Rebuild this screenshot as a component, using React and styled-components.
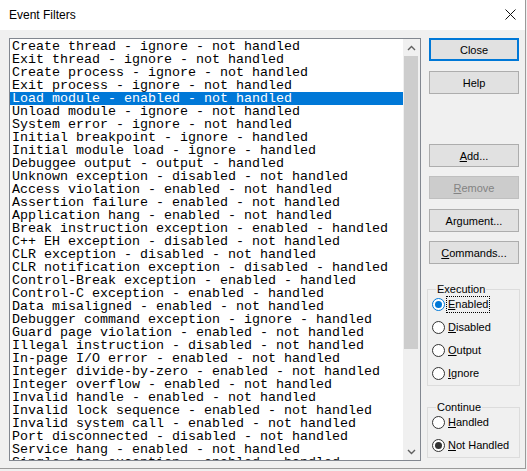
import React from "react";
import styled, { createGlobalStyle } from "styled-components";

const Global = createGlobalStyle`
  html, body { margin: 0; padding: 0; background: #f0f0f0; }
  * { box-sizing: border-box; }
`;

const Screen = styled.div`
  width: 527px;
  height: 471px;
  background: #f0f0f0;
  overflow: hidden;
`;

const Dialog = styled.div`
  width: 526px;
  height: 469px;
  border-right: 1px solid #9a9a9a;
  border-bottom: 1px solid #9a9a9a;
  display: flex;
  flex-direction: column;
  background: #f0f0f0;
`;

const TitleBar = styled.div`
  height: 30px;
  flex: 0 0 30px;
  background: #ffffff;
  display: flex;
  align-items: center;
  justify-content: space-between;
  padding: 0 8px 0 9px;
  font-family: "Liberation Sans", Arial, sans-serif;
  font-size: 12px;
  color: #000;
`;

const CloseGlyph = styled.svg`
  width: 11px;
  height: 11px;
  margin-right: 1px;
  margin-top: -1px;
`;

const Body = styled.div`
  flex: 1;
  display: flex;
  padding: 8px 0 0 9px;
  gap: 6px;
`;

const ListBox = styled.div`
  width: 412px;
  height: 423px;
  border: 1px solid #828790;
  background: #ffffff;
  display: flex;
`;

const Rows = styled.div`
  flex: 1;
  overflow: hidden;
  padding-top: 1px;
`;

const Row = styled.div`
  height: 13px;
  line-height: 13px;
  padding-left: 2px;
  white-space: pre;
  font-family: "Liberation Mono", "Courier New", monospace;
  font-size: 13.33px;
  color: ${(p) => (p.$selected ? "#ffffff" : "#000000")};
  background: ${(p) => (p.$selected ? "#0078d7" : "transparent")};
`;

const ScrollBar = styled.div`
  width: 17px;
  flex: 0 0 17px;
  background: #f0f0f0;
  display: flex;
  flex-direction: column;
`;

const ScrollArrow = styled.div`
  height: 17px;
  flex: 0 0 17px;
  display: flex;
  align-items: center;
  justify-content: center;
`;

const Track = styled.div`
  flex: 1;
  padding: 0 2px 0 1px;
`;

const Thumb = styled.div`
  height: 293px;
  background: #cdcdcd;
`;

const Side = styled.div`
  width: 93px;
  display: flex;
  flex-direction: column;
`;

const Button = styled.div`
  width: 90px;
  height: 23px;
  margin-left: 2px;
  margin-top: ${(p) => p.$mt || 0}px;
  display: flex;
  align-items: center;
  justify-content: center;
  font-family: "Liberation Sans", Arial, sans-serif;
  font-size: 11px;
  background: ${(p) => (p.$disabled ? "#cccccc" : "#e1e1e1")};
  color: ${(p) => (p.$disabled ? "#838383" : "#000000")};
  border: ${(p) =>
    p.$default ? "2px solid #0078d7" : p.$disabled ? "1px solid #bfbfbf" : "1px solid #adadad"};
`;

const Group = styled.div`
  position: relative;
  margin-top: ${(p) => p.$mt}px;
  height: ${(p) => p.$h}px;
  border: 1px solid #dcdcdc;
  padding: 3px 0 0 4px;
  display: flex;
  flex-direction: column;
`;

const GroupLabel = styled.span`
  position: absolute;
  top: -8px;
  left: 8px;
  padding: 0 1px;
  background: #f0f0f0;
  font-family: "Liberation Sans", Arial, sans-serif;
  font-size: 11px;
  line-height: 14px;
  color: #000;
`;

const Radio = styled.div`
  height: 23px;
  display: flex;
  align-items: center;
  gap: 2px;
  font-family: "Liberation Sans", Arial, sans-serif;
  font-size: 11px;
  color: #000;
`;

const Circle = styled.span`
  width: 13px;
  height: 13px;
  flex: 0 0 13px;
  border-radius: 50%;
  border: 1px solid ${(p) => (p.$focus ? "#0078d7" : "#333333")};
  background: #ffffff;
  display: flex;
  align-items: center;
  justify-content: center;
  &::after {
    content: "";
    display: ${(p) => (p.$checked ? "block" : "none")};
    width: 7px;
    height: 7px;
    border-radius: 50%;
    background: ${(p) => (p.$focus ? "#0078d7" : "#333333")};
  }
`;

const RadioText = styled.span`
  padding: 1px 1px;
  line-height: 13px;
  outline: ${(p) => (p.$focus ? "1px dotted #000" : "none")};
`;

const items = [
  "Create thread - ignore - not handled",
  "Exit thread - ignore - not handled",
  "Create process - ignore - not handled",
  "Exit process - ignore - not handled",
  "Load module - enabled - not handled",
  "Unload module - ignore - not handled",
  "System error - ignore - not handled",
  "Initial breakpoint - ignore - handled",
  "Initial module load - ignore - handled",
  "Debuggee output - output - handled",
  "Unknown exception - disabled - not handled",
  "Access violation - enabled - not handled",
  "Assertion failure - enabled - not handled",
  "Application hang - enabled - not handled",
  "Break instruction exception - enabled - handled",
  "C++ EH exception - disabled - not handled",
  "CLR exception - disabled - not handled",
  "CLR notification exception - disabled - handled",
  "Control-Break exception - enabled - handled",
  "Control-C exception - enabled - handled",
  "Data misaligned - enabled - not handled",
  "Debugger command exception - ignore - handled",
  "Guard page violation - enabled - not handled",
  "Illegal instruction - disabled - not handled",
  "In-page I/O error - enabled - not handled",
  "Integer divide-by-zero - enabled - not handled",
  "Integer overflow - enabled - not handled",
  "Invalid handle - enabled - not handled",
  "Invalid lock sequence - enabled - not handled",
  "Invalid system call - enabled - not handled",
  "Port disconnected - disabled - not handled",
  "Service hang - enabled - not handled",
  "Single step exception - enabled - handled",
];

const Chevron = ({ down }) => (
  <svg width="9" height="6" viewBox="0 0 9 6">
    <path
      d={down ? "M1 1 L4.5 4.5 L8 1" : "M1 5 L4.5 1.5 L8 5"}
      fill="none"
      stroke="#606060"
      strokeWidth="1.4"
    />
  </svg>
);

const RadioItem = ({ checked, focus, children }) => (
  <Radio>
    <Circle $checked={checked} $focus={focus} />
    <RadioText $focus={focus}>{children}</RadioText>
  </Radio>
);

export default function App() {
  return (
    <Screen>
      <Global />
      <Dialog>
        <TitleBar>
          <span>Event Filters</span>
          <CloseGlyph viewBox="0 0 11 11">
            <path d="M0.5 0.5 L10.5 10.5 M10.5 0.5 L0.5 10.5" stroke="#111" strokeWidth="1" />
          </CloseGlyph>
        </TitleBar>
        <Body>
          <ListBox>
            <Rows>
              {items.map((t, i) => (
                <Row key={i} $selected={i === 4}>
                  {t}
                </Row>
              ))}
            </Rows>
            <ScrollBar>
              <ScrollArrow>
                <Chevron />
              </ScrollArrow>
              <Track>
                <Thumb />
              </Track>
              <ScrollArrow>
                <Chevron down />
              </ScrollArrow>
            </ScrollBar>
          </ListBox>
          <Side>
            <Button $default>Close</Button>
            <Button $mt={10}>Help</Button>
            <Button $mt={50}>
              <span>
                <u>A</u>dd...
              </span>
            </Button>
            <Button $mt={9} $disabled>
              <span>
                <u>R</u>emove
              </span>
            </Button>
            <Button $mt={10}>
              <span>
                Ar<u>g</u>ument...
              </span>
            </Button>
            <Button $mt={9}>
              <span>
                <u>C</u>ommands...
              </span>
            </Button>
            <Group $mt={25} $h={97}>
              <GroupLabel>Execution</GroupLabel>
              <RadioItem checked focus>
                <u>E</u>nabled
              </RadioItem>
              <RadioItem>
                <u>D</u>isabled
              </RadioItem>
              <RadioItem>
                <u>O</u>utput
              </RadioItem>
              <RadioItem>
                <u>I</u>gnore
              </RadioItem>
            </Group>
            <Group $mt={21} $h={51}>
              <GroupLabel>Continue</GroupLabel>
              <RadioItem>
                <u>H</u>andled
              </RadioItem>
              <RadioItem checked>
                <u>N</u>ot Handled
              </RadioItem>
            </Group>
          </Side>
        </Body>
      </Dialog>
    </Screen>
  );
}
